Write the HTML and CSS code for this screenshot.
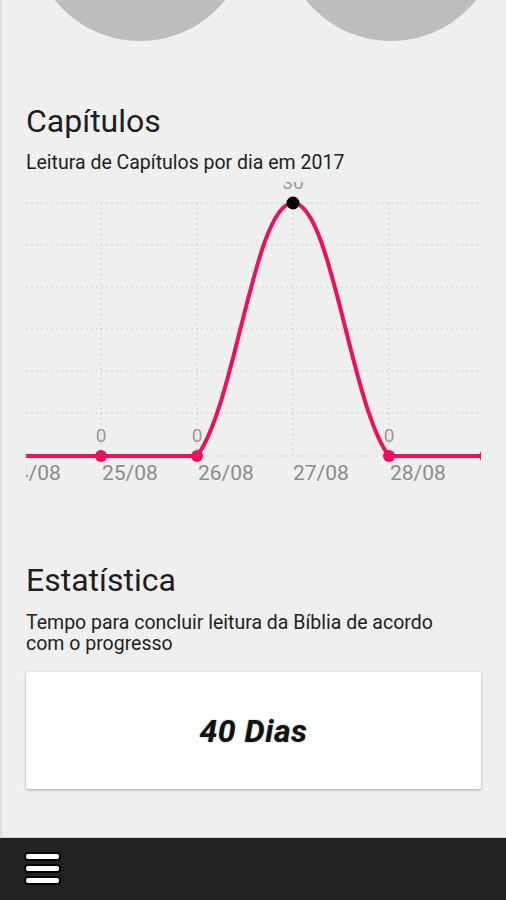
FILE: index.html
```html
<!DOCTYPE html>
<html lang="pt">
<head>
    <meta charset="UTF-8">
    <meta name="viewport" content="width=device-width, initial-scale=1.0">
    <title>Estatísticas de Leitura</title>
    <link rel="stylesheet" href="styles.css">
</head>
<body>

    <main class="content">
        <div class="circles">
            <div class="circle"></div>
            <div class="circle"></div>
        </div>

        <h2 class="title title-chapters">Capítulos</h2>
        <p class="subtitle">Leitura de Capítulos por dia em 2017</p>

        <svg class="chart" width="455" height="304" viewBox="26 182 455 304">
            <!-- grid -->
            <g class="grid">
                <line x1="26" y1="203" x2="481" y2="203"/>
                <line x1="26" y1="245" x2="481" y2="245"/>
                <line x1="26" y1="287" x2="481" y2="287"/>
                <line x1="26" y1="329" x2="481" y2="329"/>
                <line x1="26" y1="371" x2="481" y2="371"/>
                <line x1="26" y1="413" x2="481" y2="413"/>
                <line x1="26" y1="456" x2="481" y2="456"/>
                <line x1="101" y1="203" x2="101" y2="456"/>
                <line x1="197" y1="203" x2="197" y2="456"/>
                <line x1="293" y1="203" x2="293" y2="456"/>
                <line x1="389" y1="203" x2="389" y2="456"/>
            </g>

            <!-- data line -->
            <path class="line" d="M5 456 C24.2 456 81.8 456 101 456 C120.2 456 177.8 456 197 456 C235.4 405.4 254.6 203 293 203 C331.4 203 350.6 405.4 389 456 C408.2 456 465.8 456 485 456"/>

            <circle class="dot" cx="5" cy="456" r="6"/>
            <circle class="dot" cx="101" cy="456" r="6"/>
            <circle class="dot" cx="197" cy="456" r="6"/>
            <circle class="dot dot-max" cx="293" cy="203" r="6.5"/>
            <circle class="dot" cx="389" cy="456" r="6"/>
            <circle class="dot" cx="485" cy="456" r="6"/>

            <!-- values -->
            <g class="values">
                <text x="5" y="442">0</text>
                <text x="101" y="442">0</text>
                <text x="197" y="442">0</text>
                <text x="293" y="189">30</text>
                <text x="389" y="442">0</text>
                <text x="486" y="442">0</text>
            </g>

            <!-- x axis -->
            <g class="labels">
                <text x="5" y="480">24/08</text>
                <text x="102" y="480">25/08</text>
                <text x="198" y="480">26/08</text>
                <text x="293" y="480">27/08</text>
                <text x="390" y="480">28/08</text>
            </g>
        </svg>

        <h2 class="title title-stats">Estatística</h2>
        <p class="subtitle subtitle-wrap">Tempo para concluir leitura da Bíblia de acordo com o progresso</p>

        <div class="card">
            <span class="days">40 Dias</span>
        </div>
    </main>

    <footer class="bottom-bar">
        <div class="menu-icon">
            <span></span>
            <span></span>
            <span></span>
        </div>
    </footer>

</body>
</html>
```

FILE: styles.css
```css
html, body {
    margin: 0;
    height: 100%;
}
body {
    font-family: Roboto, "Noto Sans", Arial, sans-serif;
    background-color: #efefef;
    color: #1e1e1e;
    display: flex;
    flex-direction: column;
}
.content {
    flex: 1;
    border-left: 2px solid #dddddd;
    padding: 0 25px 0 24px;
    overflow: hidden;
}
.circles {
    height: 41px;
    overflow: hidden;
    display: flex;
    gap: 33px;
    margin-left: 5px;
}
.circle {
    flex: none;
    width: 218px;
    height: 218px;
    margin-top: -177px;
    border-radius: 50%;
    background-color: #bdbdbd;
}
.title {
    font-size: 32px;
    line-height: 38px;
    font-weight: 400;
    margin: 0;
}
.title-chapters {
    margin-top: 61px;
}
.title-stats {
    margin-top: 75px;
}
.subtitle {
    font-size: 19.5px;
    line-height: 22px;
    margin: 12px 0 0;
    color: #222;
}
.subtitle-wrap {
    line-height: 21px;
    margin-top: 13px;
    padding-right: 30px;
}
.chart {
    display: block;
    margin-top: 8px;
}
.grid line {
    stroke: #cfcfcf;
    stroke-width: 1.2;
    stroke-dasharray: 2 3;
}
.line {
    fill: none;
    stroke: #e8135c;
    stroke-width: 4;
}
.dot {
    fill: #e8135c;
}
.dot-max {
    fill: #000;
}
.values text {
    font-size: 19px;
    fill: #9a9a9a;
    text-anchor: middle;
}
.labels text {
    font-size: 21px;
    fill: #8c8c8c;
}
.card {
    margin-top: 18px;
    height: 117px;
    background-color: #fff;
    border-radius: 2px;
    box-shadow: 0 1px 3px rgba(0, 0, 0, 0.3);
    display: flex;
    align-items: center;
    justify-content: center;
}
.days {
    font-size: 32px;
    line-height: 38px;
    letter-spacing: 0.5px;
    font-weight: 700;
    font-style: italic;
    color: #111;
    text-shadow: 0 0 2px rgba(0, 0, 0, 0.35);
}
.bottom-bar {
    flex: none;
    height: 63px;
    background-color: #212121;
    border-top: 1px solid #d0d0d0;
    box-sizing: border-box;
    padding: 14px 0 0 24px;
}
.menu-icon {
    display: flex;
    flex-direction: column;
    gap: 3px;
    width: 37px;
}
.menu-icon span {
    height: 5px;
    background-color: #fff;
    border: 2px solid #000;
    border-radius: 4px;
}
```
